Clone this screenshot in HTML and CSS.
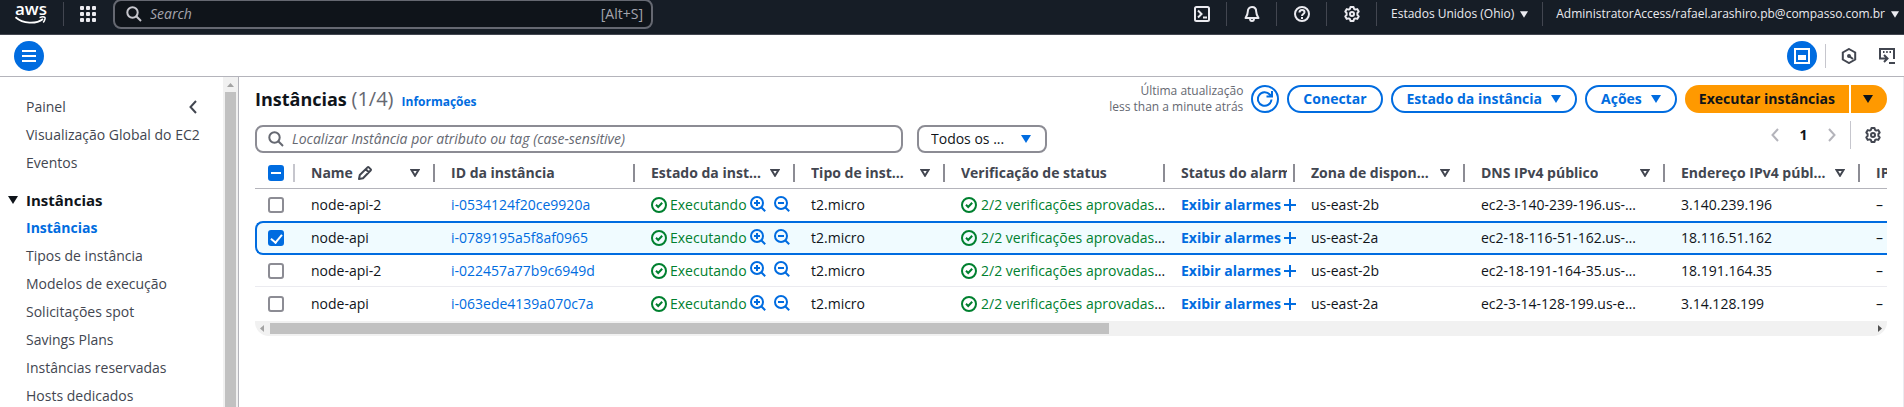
FILE: index.html
```html
<!DOCTYPE html>
<html lang="pt-BR">
<head>
<meta charset="utf-8">
<meta name="viewport" content="width=device-width, initial-scale=1">
<title>Instâncias | EC2</title>
<link rel="stylesheet" href="styles.css">
</head>
<body>
<svg class="sprite" aria-hidden="true">
  <symbol id="i-search" viewBox="0 0 16 16"><circle cx="6.5" cy="6.5" r="5.2"/><path d="M10.3 10.3 15 15"/></symbol>
  <symbol id="i-gear" viewBox="0 0 16 16"><path stroke-linejoin="round" d="M6.500 1h3l.5 1.800 1.300.8 1.900-.5 1.500 2.500L13.400 7v2l1.300 1.400-1.500 2.500-1.900-.5-1.300.8L9.500 15h-3L6 13.200l-1.300-.8-1.900.5-1.500-2.500L2.600 9V7L1.300 5.600l1.500-2.500 1.900.5L6 2.800z"/><circle cx="8" cy="8" r="2"/></symbol>
  <symbol id="i-check" viewBox="0 0 16 16"><circle cx="8" cy="8" r="7"/><path d="m5 7.800 2.200 2.200 4-4.300"/></symbol>
  <symbol id="i-zoom-in" viewBox="0 0 16 16"><circle cx="7" cy="7" r="6"/><path d="m11.200 11.200 4 4M4 7h6M7 4v6"/></symbol>
  <symbol id="i-zoom-out" viewBox="0 0 16 16"><circle cx="7" cy="7" r="6"/><path d="m11.200 11.200 4 4M4 7h6"/></symbol>
  <symbol id="i-plus" viewBox="0 0 12 12"><path d="M6 0v12M0 6h12"/></symbol>
  <symbol id="i-down" viewBox="0 0 10 8"><path d="M0 0h10L5 8z"/></symbol>
  <symbol id="i-sort" viewBox="0 0 10 8"><path d="M1.500 1h7L5 6.700z"/></symbol>
  <symbol id="i-left" viewBox="0 0 8 14"><path d="M7 1 1.500 7 7 13"/></symbol>
  <symbol id="i-right" viewBox="0 0 8 14"><path d="m1 1 5.500 6L1 13"/></symbol>
</svg>

<header class="topbar">
  <a class="logo" href="#" aria-label="AWS">
    <span class="logo-word">aws</span>
    <svg class="logo-smile" viewBox="0 0 32 9"><path d="M.5 1.200C8 8 21 8.400 28 3" fill="none" stroke="#fff" stroke-width="1.800"/><path d="M24.500 1.600c2-.7 4.600-.8 5.300-.2s-.1 3.500-1.600 5.200" fill="none" stroke="#fff" stroke-width="1.500"/></svg>
  </a>
  <span class="rule"></span>
  <button class="icon-btn apps" aria-label="Serviços">
    <svg width="16" height="16" viewBox="0 0 16 16" fill="#fff"><rect width="4" height="4" rx="1"/><rect x="6" width="4" height="4" rx="1"/><rect x="12" width="4" height="4" rx="1"/><rect y="6" width="4" height="4" rx="1"/><rect x="6" y="6" width="4" height="4" rx="1"/><rect x="12" y="6" width="4" height="4" rx="1"/><rect y="12" width="4" height="4" rx="1"/><rect x="6" y="12" width="4" height="4" rx="1"/><rect x="12" y="12" width="4" height="4" rx="1"/></svg>
  </button>
  <label class="global-search">
    <svg class="ico" width="16" height="16"><use href="#i-search"/></svg>
    <input type="search" placeholder="Search" aria-label="Search">
    <span>[Alt+S]</span>
  </label>
  <nav class="top-actions">
    <button class="icon-btn" aria-label="CloudShell"><svg class="ico" width="16" height="16" viewBox="0 0 16 16"><rect x="1" y="1" width="14" height="14" rx="1.500"/><path d="m4 4.500 3.500 3.500L4 11.500M9 11.500h4"/></svg></button>
    <span class="rule"></span>
    <button class="icon-btn" aria-label="Notificações"><svg class="ico" width="16" height="16" viewBox="0 0 16 16"><path stroke-linejoin="round" d="M8 1C5.200 1 3.800 3 3.800 5.500c0 3-1 4.500-2.300 6.500h13c-1.300-2-2.300-3.500-2.300-6.500C12.200 3 10.800 1 8 1zM6 12.500C6 14 6.800 15 8 15s2-1 2-2.500"/></svg></button>
    <span class="rule"></span>
    <button class="icon-btn" aria-label="Ajuda"><svg class="ico" width="16" height="16" viewBox="0 0 16 16"><circle cx="8" cy="8" r="7"/><path d="M5.500 6.500C5.500 5 6.500 4 8 4s2.500.9 2.500 2.200C10.500 8 8 7.900 8 10M8 11v2"/></svg></button>
    <span class="rule"></span>
    <button class="icon-btn" aria-label="Configurações"><svg class="ico" width="16" height="16"><use href="#i-gear"/></svg></button>
    <span class="rule"></span>
    <button class="menu-btn region">Estados Unidos (Ohio)<svg width="8" height="7"><use href="#i-down"/></svg></button>
    <span class="rule"></span>
    <button class="menu-btn account">AdministratorAccess/rafael.arashiro.pb@compasso.com.br<svg width="8" height="7"><use href="#i-down"/></svg></button>
  </nav>
</header>

<div class="subbar">
  <button class="round" aria-label="Abrir navegação"><svg width="14" height="12" viewBox="0 0 14 12" stroke="#fff" stroke-width="2"><path d="M0 1h14M0 6h14M0 11h14"/></svg></button>
  <div class="panel-tools">
    <button class="round" aria-label="Painel dividido"><svg width="16" height="16" viewBox="0 0 16 16"><rect x="1" y="1" width="14" height="14" fill="none" stroke="#fff" stroke-width="2"/><path d="M4 7h8v5H4z" fill="#fff"/></svg></button>
    <span class="rule"></span>
    <button class="icon-btn" aria-label="Amazon Q"><svg class="ico" width="16" height="16" viewBox="0 0 16 16"><path d="M8 1l6.200 3.500v7L8 15l-6.200-3.500v-7z"/><path d="m8 8 4 3"/><circle cx="8" cy="8" r="1" fill="currentColor"/></svg></button>
    <button class="icon-btn" aria-label="Comandos"><svg class="ico" width="16" height="16" viewBox="0 0 16 16"><path d="M1 11V1h14v10M10 15h6M0 10.500h8M5 7l3.500 3.500L5 14"/><path d="M4 4h1.500M7.200 4h1.500M10.500 4H12"/></svg></button>
  </div>
</div>

<div class="workspace">
  <nav class="sidebar">
    <div class="side-body">
      <div class="side-top"><a href="#">Painel</a><button class="icon-btn" aria-label="Fechar navegação"><svg class="ico" width="8" height="14"><use href="#i-left"/></svg></button></div>
      <a href="#">Visualização Global do EC2</a>
      <a href="#">Eventos</a>
      <button class="group"><svg width="10" height="8"><use href="#i-down"/></svg>Instâncias</button>
      <a class="active" href="#">Instâncias</a>
      <a href="#">Tipos de instância</a>
      <a href="#">Modelos de execução</a>
      <a href="#">Solicitações spot</a>
      <a href="#">Savings Plans</a>
      <a href="#">Instâncias reservadas</a>
      <a href="#">Hosts dedicados</a>
    </div>
    <div class="vbar"><svg width="7" height="4" viewBox="0 0 7 4"><path d="M0 4h7L3.500 0z" fill="#a3a3a3"/></svg><span></span></div>
  </nav>

  <main class="main">
    <div class="heading">
      <h1>Instâncias <span>(1/4)</span></h1>
      <a href="#">Informações</a>
      <div class="actions">
        <p>Última atualização<br>less than a minute atrás</p>
        <button class="btn refresh" aria-label="Atualizar"><svg class="ico" width="16" height="16" viewBox="0 0 16 16"><path d="M14.500 8.500A6.800 6.800 0 1 1 12.800 3.500L15 5M15 0v5.500H9.500"/></svg></button>
        <button class="btn">Conectar</button>
        <button class="btn">Estado da instância<svg width="10" height="8"><use href="#i-down"/></svg></button>
        <button class="btn">Ações<svg width="10" height="8"><use href="#i-down"/></svg></button>
        <div class="split"><button>Executar instâncias</button><button class="more" aria-label="Mais opções"><svg width="10" height="8"><use href="#i-down"/></svg></button></div>
      </div>
    </div>

    <div class="filters">
      <label class="field"><svg class="ico" width="16" height="16"><use href="#i-search"/></svg><input type="search" placeholder="Localizar Instância por atributo ou tag (case-sensitive)" aria-label="Localizar Instância"></label>
      <div class="select"><select aria-label="Estado"><option>Todos os ...</option></select><svg width="10" height="8"><use href="#i-down"/></svg></div>
      <div class="pager">
        <button class="icon-btn" aria-label="Página anterior"><svg class="ico" width="8" height="14"><use href="#i-left"/></svg></button>
        <button class="page">1</button>
        <button class="icon-btn" aria-label="Próxima página"><svg class="ico" width="8" height="14"><use href="#i-right"/></svg></button>
        <span class="rule"></span>
        <button class="icon-btn gear" aria-label="Preferências"><svg class="ico" width="16" height="16"><use href="#i-gear"/></svg></button>
      </div>
    </div>

    <div class="table-wrap">
      <table>
        <colgroup><col class="c-check"><col class="c-name"><col class="c-id"><col class="c-state"><col class="c-type"><col class="c-status"><col class="c-alarm"><col class="c-zone"><col class="c-dns"><col class="c-ip"><col class="c-eip"></colgroup>
        <thead><tr>
          <th class="pick"><input class="some" type="checkbox" aria-label="Selecionar todas"></th>
          <th><div><span>Name</span><svg class="ico pencil" width="14" height="14" viewBox="0 0 14 14"><path stroke-linejoin="round" d="m1 13 .8-4L9.500 1.400q.7-.7 1.400 0l1.700 1.700q.7.7 0 1.400L5 12.200zM7.800 3.200l3 3"/></svg><svg class="ico sort" width="10" height="8"><use href="#i-sort"/></svg></div></th>
          <th><div><span>ID da instância</span></div></th>
          <th><div><span>Estado da inst…</span><svg class="ico sort" width="10" height="8"><use href="#i-sort"/></svg></div></th>
          <th><div><span>Tipo de inst…</span><svg class="ico sort" width="10" height="8"><use href="#i-sort"/></svg></div></th>
          <th><div><span>Verificação de status</span></div></th>
          <th class="clipped"><div><span>Status do alarme</span></div></th>
          <th><div><span>Zona de dispon…</span><svg class="ico sort" width="10" height="8"><use href="#i-sort"/></svg></div></th>
          <th><div><span>DNS IPv4 público</span><svg class="ico sort" width="10" height="8"><use href="#i-sort"/></svg></div></th>
          <th><div><span>Endereço IPv4 públ…</span><svg class="ico sort" width="10" height="8"><use href="#i-sort"/></svg></div></th>
          <th><div><span>IP elástico</span></div></th>
        </tr></thead>
        <tbody>
          <tr>
            <td class="pick"><input type="checkbox" aria-label="node-api-2"></td><td>node-api-2</td><td><a href="#">i-0534124f20ce9920a</a></td>
            <td><div class="state"><svg class="ico" width="16" height="16"><use href="#i-check"/></svg><span>Executando</span><button class="icon-btn" aria-label="Incluir no filtro"><svg class="ico" width="16" height="16"><use href="#i-zoom-in"/></svg></button><button class="icon-btn" aria-label="Excluir do filtro"><svg class="ico" width="16" height="16"><use href="#i-zoom-out"/></svg></button></div></td>
            <td>t2.micro</td><td><div class="status"><svg class="ico" width="16" height="16"><use href="#i-check"/></svg><span>2/2 verificações aprovadas<i>…</i></span></div></td>
            <td><div class="alarm"><a href="#">Exibir alarmes</a><button class="icon-btn" aria-label="Criar alarme"><svg class="ico" width="12" height="12"><use href="#i-plus"/></svg></button></div></td>
            <td>us-east-2b</td><td>ec2-3-140-239-196.us-…</td><td>3.140.239.196</td><td>–</td>
          </tr>
          <tr class="selected">
            <td class="pick"><input type="checkbox" checked aria-label="node-api"></td><td>node-api</td><td><a href="#">i-0789195a5f8af0965</a></td>
            <td><div class="state"><svg class="ico" width="16" height="16"><use href="#i-check"/></svg><span>Executando</span><button class="icon-btn" aria-label="Incluir no filtro"><svg class="ico" width="16" height="16"><use href="#i-zoom-in"/></svg></button><button class="icon-btn" aria-label="Excluir do filtro"><svg class="ico" width="16" height="16"><use href="#i-zoom-out"/></svg></button></div></td>
            <td>t2.micro</td><td><div class="status"><svg class="ico" width="16" height="16"><use href="#i-check"/></svg><span>2/2 verificações aprovadas<i>…</i></span></div></td>
            <td><div class="alarm"><a href="#">Exibir alarmes</a><button class="icon-btn" aria-label="Criar alarme"><svg class="ico" width="12" height="12"><use href="#i-plus"/></svg></button></div></td>
            <td>us-east-2a</td><td>ec2-18-116-51-162.us-…</td><td>18.116.51.162</td><td>–</td>
          </tr>
          <tr>
            <td class="pick"><input type="checkbox" aria-label="node-api-2"></td><td>node-api-2</td><td><a href="#">i-022457a77b9c6949d</a></td>
            <td><div class="state"><svg class="ico" width="16" height="16"><use href="#i-check"/></svg><span>Executando</span><button class="icon-btn" aria-label="Incluir no filtro"><svg class="ico" width="16" height="16"><use href="#i-zoom-in"/></svg></button><button class="icon-btn" aria-label="Excluir do filtro"><svg class="ico" width="16" height="16"><use href="#i-zoom-out"/></svg></button></div></td>
            <td>t2.micro</td><td><div class="status"><svg class="ico" width="16" height="16"><use href="#i-check"/></svg><span>2/2 verificações aprovadas<i>…</i></span></div></td>
            <td><div class="alarm"><a href="#">Exibir alarmes</a><button class="icon-btn" aria-label="Criar alarme"><svg class="ico" width="12" height="12"><use href="#i-plus"/></svg></button></div></td>
            <td>us-east-2b</td><td>ec2-18-191-164-35.us-…</td><td>18.191.164.35</td><td>–</td>
          </tr>
          <tr>
            <td class="pick"><input type="checkbox" aria-label="node-api"></td><td>node-api</td><td><a href="#">i-063ede4139a070c7a</a></td>
            <td><div class="state"><svg class="ico" width="16" height="16"><use href="#i-check"/></svg><span>Executando</span><button class="icon-btn" aria-label="Incluir no filtro"><svg class="ico" width="16" height="16"><use href="#i-zoom-in"/></svg></button><button class="icon-btn" aria-label="Excluir do filtro"><svg class="ico" width="16" height="16"><use href="#i-zoom-out"/></svg></button></div></td>
            <td>t2.micro</td><td><div class="status"><svg class="ico" width="16" height="16"><use href="#i-check"/></svg><span>2/2 verificações aprovadas<i>…</i></span></div></td>
            <td><div class="alarm"><a href="#">Exibir alarmes</a><button class="icon-btn" aria-label="Criar alarme"><svg class="ico" width="12" height="12"><use href="#i-plus"/></svg></button></div></td>
            <td>us-east-2a</td><td>ec2-3-14-128-199.us-e…</td><td>3.14.128.199</td><td>–</td>
          </tr>
        </tbody>
      </table>
    </div>
    <div class="hbar"><svg width="4" height="7" viewBox="0 0 4 7"><path d="M4 0v7L0 3.500z" fill="#a3a3a3"/></svg><div><span></span></div><svg width="4" height="7" viewBox="0 0 4 7"><path d="M0 0v7l4-3.500z" fill="#505050"/></svg></div>
  </main>
</div>
</body>
</html>
```
FILE: styles.css
```css
:root {
  --blue: #006ce0;
  --ink: #0f141a;
  --slate: #424650;
  --gray: #656871;
  --edge: #8c8c94;
  --line: #b4b4bb;
  --green: #00802f;
}

* { box-sizing: border-box; }

body {
  margin: 0;
  height: 100vh;
  overflow: hidden;
  display: flex;
  flex-direction: column;
  font: 14px/20px "Open Sans", "Noto Sans", sans-serif;
  color: var(--ink);
  background: #fff;
}

a { color: var(--blue); text-decoration: none; }

button, input, select { font: inherit; color: inherit; }

button {
  display: inline-flex;
  align-items: center;
  justify-content: center;
  padding: 0;
  border: 0;
  background: none;
  white-space: nowrap;
  cursor: pointer;
}

svg { display: block; flex: none; fill: currentColor; }
.ico { fill: none; stroke: currentColor; stroke-width: 2; }
.sprite { position: absolute; width: 0; height: 0; }

.rule { flex: none; width: 1px; height: 24px; background: var(--slate); }

/* Top bar */
.topbar {
  flex: none;
  display: flex;
  align-items: center;
  height: 35px;
  padding: 0 5px 6px 15px;
  color: #ebebf0;
  background: #161d26;
  border-bottom: 1px solid var(--slate);
}

.logo { width: 32px; margin-right: 16px; color: #fff; }
.logo-word { display: block; height: 13px; font-size: 17px; line-height: 11px; font-weight: 600; text-align: center; }
.logo-smile { width: 32px; height: 9px; }
.apps { margin: 0 17px 0 16px; }

.global-search {
  flex: 0 1 540px;
  display: flex;
  align-items: center;
  gap: 8px;
  height: 30px;
  padding: 0 8px 0 11px;
  color: #c6c6cd;
  background: #0f141a;
  border: 2px solid var(--gray);
  border-radius: 8px;
}

.global-search input, .field input {
  flex: 1;
  min-width: 0;
  padding: 0;
  border: 0;
  outline: 0;
  background: none;
}
.global-search input::placeholder { color: #a4a4ad; font-style: italic; }
.global-search span { color: #a4a4ad; }

.top-actions { display: flex; align-items: center; margin-left: auto; }
.top-actions .icon-btn { width: 49px; }
.menu-btn { gap: 6px; font-size: 12px; }
.region { padding: 0 14px; }
.account { padding-left: 13px; }

/* Secondary bar */
.subbar {
  flex: none;
  display: flex;
  align-items: center;
  justify-content: space-between;
  height: 42px;
  padding: 0 9px 0 14px;
  border-bottom: 1px solid var(--line);
}
.subbar .rule { background: #c6c6cd; margin-left: 8px; margin-right: 15px; }
.round { width: 30px; height: 30px; border-radius: 50%; background: var(--blue); }
.panel-tools { display: flex; align-items: center; color: var(--slate); }
.panel-tools .icon-btn + .icon-btn { margin-left: 22px; }

/* Sidebar */
.workspace { flex: 1; min-height: 0; display: flex; }

.sidebar {
  flex: none;
  display: flex;
  width: 239px;
  border-right: 1px solid var(--line);
  overflow: hidden;
}
.side-body {
  flex: 1;
  min-width: 0;
  display: flex;
  flex-direction: column;
  gap: 8px;
  padding: 20px 26px 0;
  white-space: nowrap;
  color: var(--slate);
}
.side-body a { color: var(--slate); }
.side-body .active { color: var(--blue); font-weight: 700; }
.side-top { display: flex; justify-content: space-between; }
.group {
  justify-content: flex-start;
  gap: 8px;
  height: 21px;
  margin: 8px 0 0 -18px;
  font-size: 15px;
  font-weight: 700;
  color: var(--ink);
}
.vbar {
  flex: none;
  display: flex;
  flex-direction: column;
  align-items: center;
  width: 15px;
  padding-top: 6px;
  background: #f1f1f1;
}
.vbar span { flex: 1; width: 11px; margin-top: 5px; background: #c1c1c1; }

/* Main panel */
.main { flex: 1; min-width: 0; padding: 8px 16px 0; border-right: 1px solid #ebebf0; }

.heading { display: flex; align-items: center; height: 28px; }
.heading h1 { margin: 0 8px 0 0; font-size: 18px; line-height: 28px; white-space: nowrap; }
.heading h1 span { font-size: 20px; font-weight: 400; color: var(--gray); }
.heading > a { font-size: 12px; font-weight: 700; margin-top: 5px; }

.actions { display: flex; align-items: center; gap: 8px; margin-left: auto; }
.actions p { margin: 0; font-size: 12px; line-height: 16px; text-align: right; color: var(--gray); white-space: nowrap; }

.btn {
  gap: 9px;
  height: 28px;
  padding: 0 14px;
  border: 2px solid var(--blue);
  border-radius: 14px;
  font-weight: 700;
  color: var(--blue);
}
.refresh { width: 28px; padding: 0; }

.split { display: flex; gap: 2px; }
.split button { height: 28px; padding: 0 14px; font-weight: 700; background: #ff9900; border-radius: 14px 0 0 14px; }
.split .more { width: 36px; padding: 0 3px 0 0; border-radius: 0 14px 14px 0; }

.filters { display: flex; align-items: center; height: 28px; margin: 12px 0 4px; }
.field, .select select { height: 28px; border: 2px solid var(--edge); border-radius: 8px; background: #fff; }
.field { flex: 0 1 648px; display: flex; align-items: center; gap: 8px; padding: 0 11px; color: var(--gray); }
.field input::placeholder { color: var(--gray); font-style: italic; }

.select { position: relative; flex: none; width: 130px; margin-left: 14px; }
.select select { display: block; width: 100%; padding: 0 34px 0 12px; appearance: none; font-weight: 500; }
.select svg { position: absolute; right: 16px; top: 10px; color: var(--blue); pointer-events: none; }

.pager { display: flex; align-items: center; margin: 0 0 8px auto; color: var(--line); }
.page { width: 49px; font-weight: 700; color: var(--ink); }
.pager .rule { height: 28px; margin: 0 14px; background: #c6c6cd; }
.gear { margin-right: 6px; color: var(--slate); }

/* Table */
.table-wrap { overflow: hidden; }
table { width: 1805px; table-layout: fixed; border-collapse: separate; border-spacing: 0; }
.c-check { width: 40px; }
.c-name { width: 140px; }
.c-id, .c-dns, .c-eip { width: 200px; }
.c-state { width: 160px; }
.c-type { width: 150px; }
.c-status { width: 220px; }
.c-alarm { width: 130px; }
.c-zone { width: 170px; }
.c-ip { width: 195px; }

th, td { height: 32px; padding: 0 0 0 16px; text-align: left; white-space: nowrap; }
th {
  color: var(--slate);
  border-bottom: 1px solid var(--line);
  background: linear-gradient(var(--edge), var(--edge)) right center / 2px 18px no-repeat;
}
th.pick { background-image: linear-gradient(#c6c6cd, #c6c6cd); }
th div { display: flex; align-items: center; margin-right: 15px; }
th.clipped div { margin-right: 8px; }
th span { overflow: hidden; }
.pencil { margin-left: 5px; }
.sort { margin-left: auto; }
td { border-bottom: 1px solid #ebebf0; }
tr:last-child td { height: 34px; border-bottom: 0; }
thead tr:last-child th { height: 32px; }
tr:has(+ .selected) td { border-bottom: 0; }
.selected td { height: 34px; background: #f0fbff; border-top: 2px solid var(--blue); border-bottom: 2px solid var(--blue); }
.selected td:first-child { padding-left: 11px; border-left: 2px solid var(--blue); border-radius: 8px 0 0 8px; }

th.pick, td.pick { padding-left: 13px; }
.pick input {
  display: grid;
  place-items: center;
  width: 16px;
  height: 16px;
  margin: 0;
  appearance: none;
  background: #fff;
  border: 2px solid var(--edge);
  border-radius: 3px;
}
.pick .some, .pick input:checked { background: var(--blue); border-color: var(--blue); }
.pick .some::before { content: ""; width: 10px; height: 2px; background: #fff; }
.pick input:checked::before {
  content: "";
  width: 5px;
  height: 9px;
  margin-bottom: 2px;
  border: solid #fff;
  border-width: 0 2px 2px 0;
  rotate: 40deg;
}

.state, .status, .alarm { display: flex; align-items: center; }
.state, .status { gap: 4px; color: var(--green); }
.state { gap: 3px; }
.state button { color: var(--blue); margin-bottom: 3px; }
.state button + button { margin-left: 5px; }
.status i { color: var(--ink); font-style: normal; }
.alarm { gap: 3px; color: var(--blue); font-weight: 700; }

/* Horizontal scroll bar */
.hbar {
  display: flex;
  align-items: center;
  gap: 6px;
  height: 15px;
  padding: 0 5px;
  background: #f1f1f1;
  border-radius: 0 0 14px 14px;
}
.hbar div { flex: 1; }
.hbar span { display: block; width: 52.4%; height: 11px; background: #c1c1c1; }
```
